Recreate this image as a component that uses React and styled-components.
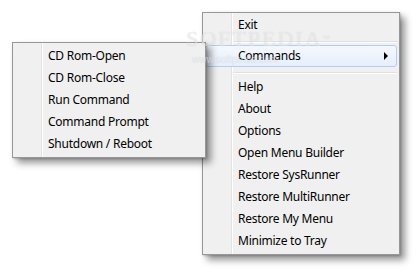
import React from 'react';
import styled, { createGlobalStyle, css } from 'styled-components';

const GlobalStyle = createGlobalStyle`
	html, body {
		margin: 0;
		padding: 0;
		background: #ffffff;
	}
	body {
		font-family: 'Noto Sans', 'Open Sans', sans-serif;
		font-size: 12px;
		color: #000;
	}
`;

// The desktop: menus sit side by side, the submenu overlapping the tray menu by a few pixels
const Desktop = styled.div`
	position: relative;
	display: flex;
	align-items: flex-start;
	box-sizing: border-box;
	width: 420px;
	height: 274px;
	padding: 12px 0 0 12px;
	overflow: hidden;
	background: #ffffff;
`;

// Windows 7 style popup menu
const Menu = styled.ul`
	position: relative;
	z-index: ${(p) => p.$z};
	flex: none;
	width: ${(p) => p.$width}px;
	box-sizing: border-box;
	margin: ${(p) => p.$margin};
	padding: ${(p) => p.$padTop}px 2px 2px 2px;
	list-style: none;
	background: #f0f0f0;
	border: 1px solid #979797;
	box-shadow: 5px 5px 7px rgba(0, 0, 0, 0.42), 1px 1px 2px rgba(0, 0, 0, 0.2);

	&::before {
		content: '';
		position: absolute;
		top: 0;
		bottom: 0;
		left: 28px;
		width: 1px;
		background: #e2e3e3;
		box-shadow: 1px 0 0 #ffffff;
	}
`;

const Item = styled.li`
	position: relative;
	box-sizing: border-box;
	height: 22px;
	line-height: 20px;
	padding-left: 32px;
	border: 1px solid transparent;
	border-radius: 3px;
	letter-spacing: -0.25px;
	white-space: nowrap;

	${(p) =>
		p.$active &&
		css`
			border-color: #aecff7;
			background: linear-gradient(#f5f9fe, #e6effc);
			z-index: 1;
		`}
`;

const Separator = styled.li`
	height: 9px;
	position: relative;

	&::after {
		content: '';
		position: absolute;
		left: 28px;
		right: 0;
		top: 5px;
		height: 1px;
		background: #e0e0e0;
		box-shadow: 0 1px 0 #ffffff;
	}
`;

const Arrow = styled.span`
	position: absolute;
	right: 8px;
	top: 6px;
	width: 0;
	height: 0;
	border-top: 4px solid transparent;
	border-bottom: 4px solid transparent;
	border-left: 4px solid #000;
`;

// faint site watermark lying over the menus
const Watermark = styled.div`
	position: absolute;
	left: 186px;
	top: 28px;
	z-index: 5;
	pointer-events: none;
	color: rgba(255, 255, 255, 0.55);
	text-shadow: 0 0 1px rgba(0, 0, 0, 0.16);
	font-family: 'Liberation Serif', serif;
`;

const MarkTitle = styled.div`
	font-size: 22px;
	letter-spacing: 2px;
	line-height: 22px;

	sup {
		font-size: 8px;
		vertical-align: top;
	}
`;

const MarkUrl = styled.div`
	font-family: 'Liberation Sans', sans-serif;
	font-size: 10px;
	margin-top: 4px;
	margin-left: 6px;
`;

const mainItems = ['Help', 'About', 'Options', 'Open Menu Builder', 'Restore SysRunner', 'Restore MultiRunner', 'Restore My Menu', 'Minimize to Tray'];
const subItems = ['CD Rom-Open', 'CD Rom-Close', 'Run Command', 'Command Prompt', 'Shutdown / Reboot'];

const App = () => {
	return (
		<Desktop>
			<GlobalStyle />

			{/* Commands submenu */}
			<Menu $width={194} $padTop={2} $z={2} $margin='30px 0 0 0'>
				{subItems.map((label) => (
					<Item key={label}>{label}</Item>
				))}
			</Menu>

			{/* Main tray menu */}
			<Menu $width={198} $padTop={1} $z={1} $margin='0 0 0 -4px'>
				<Item>Exit</Item>
				<Separator />
				<Item $active>
					Commands
					<Arrow />
				</Item>
				<Separator />
				{mainItems.map((label) => (
					<Item key={label}>{label}</Item>
				))}
			</Menu>

			<Watermark>
				<MarkTitle>
					SOFTPEDIA<sup>™</sup>
				</MarkTitle>
				<MarkUrl>www.softpedia.com</MarkUrl>
			</Watermark>
		</Desktop>
	);
};

export default App;
